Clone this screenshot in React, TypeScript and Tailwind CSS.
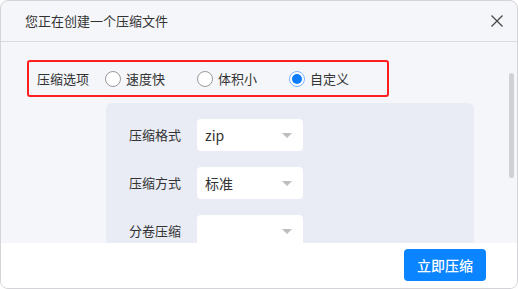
import React from "react";

const font = {
  fontFamily: '"Noto Sans CJK SC", "Noto Sans", "Liberation Sans", sans-serif',
};

const Radio = ({ label, checked }: { label: string; checked?: boolean }) => (
  <label className="flex items-center gap-[5px]">
    {checked ? (
      <span className="flex h-[16px] w-[16px] items-center justify-center rounded-full border border-[#7db3ff] bg-white">
        <span className="h-[10px] w-[10px] rounded-full bg-[#0a7cff]" />
      </span>
    ) : (
      <span className="h-[16px] w-[16px] rounded-full border border-[#9a9a9a] bg-white" />
    )}
    <span>{label}</span>
  </label>
);

const SelectBox = ({ value }: { value?: string }) => (
  <div className="flex h-[32px] w-[106px] items-center justify-between rounded-[4px] bg-white pl-[8px] pr-[11px] text-[14px]">
    <span>{value}</span>
    <span className="h-0 w-0 border-x-[5px] border-t-[5px] border-x-transparent border-t-[#bdbdbd]" />
  </div>
);

const Row = ({ label, value }: { label: string; value?: string }) => (
  <div className="flex items-center gap-[16px]">
    <span className="w-[52px]">{label}</span>
    <SelectBox value={value} />
  </div>
);

export default function App() {
  return (
    <div
      className="flex h-[289px] w-[518px] flex-col overflow-hidden rounded-[8px] border border-[#d4d4d8] bg-[#f5f6fa] text-[13px] text-[#333]"
      style={font}
    >
      {/* Header */}
      <div className="flex h-[41px] shrink-0 items-center justify-between border-b border-[#dadadd] pl-[24px] pr-[13px]">
        <span>您正在创建一个压缩文件</span>
        <svg width="14" height="14" viewBox="0 0 14 14" fill="none">
          <path d="M1.5 1.5L12.5 12.5M12.5 1.5L1.5 12.5" stroke="#444" strokeWidth="1.2" />
        </svg>
      </div>

      {/* Body */}
      <div className="relative flex-1 overflow-hidden">
        <div className="pl-[26px] pt-[18px]">
          <div className="flex h-[37px] w-[362px] items-center rounded-[3px] border-2 border-[#ff1f1f] pl-[8px]">
            <span className="mr-[16px]">压缩选项</span>
            <div className="flex items-center gap-[32px]">
              <Radio label="速度快" />
              <Radio label="体积小" />
              <Radio label="自定义" checked />
            </div>
          </div>

          <div className="ml-[79px] mt-[6px] flex h-[200px] w-[368px] flex-col gap-[16px] rounded-[6px] bg-[#e9ecf5] pl-[23px] pt-[16px]">
            <Row label="压缩格式" value="zip" />
            <Row label="压缩方式" value="标准" />
            <Row label="分卷压缩" />
          </div>
        </div>

        {/* scrollbar thumb */}
        <div className="absolute right-[3px] top-[31px] h-[105px] w-[5px] rounded-full bg-[#d0d1d6]" />
      </div>

      {/* Footer */}
      <div className="flex h-[45px] shrink-0 items-start justify-end bg-white pr-[31px] pt-[6px]">
        <button className="h-[32px] w-[82px] rounded-[4px] bg-[#0a84ff] text-[14px] font-medium text-white">
          立即压缩
        </button>
      </div>
    </div>
  );
}
